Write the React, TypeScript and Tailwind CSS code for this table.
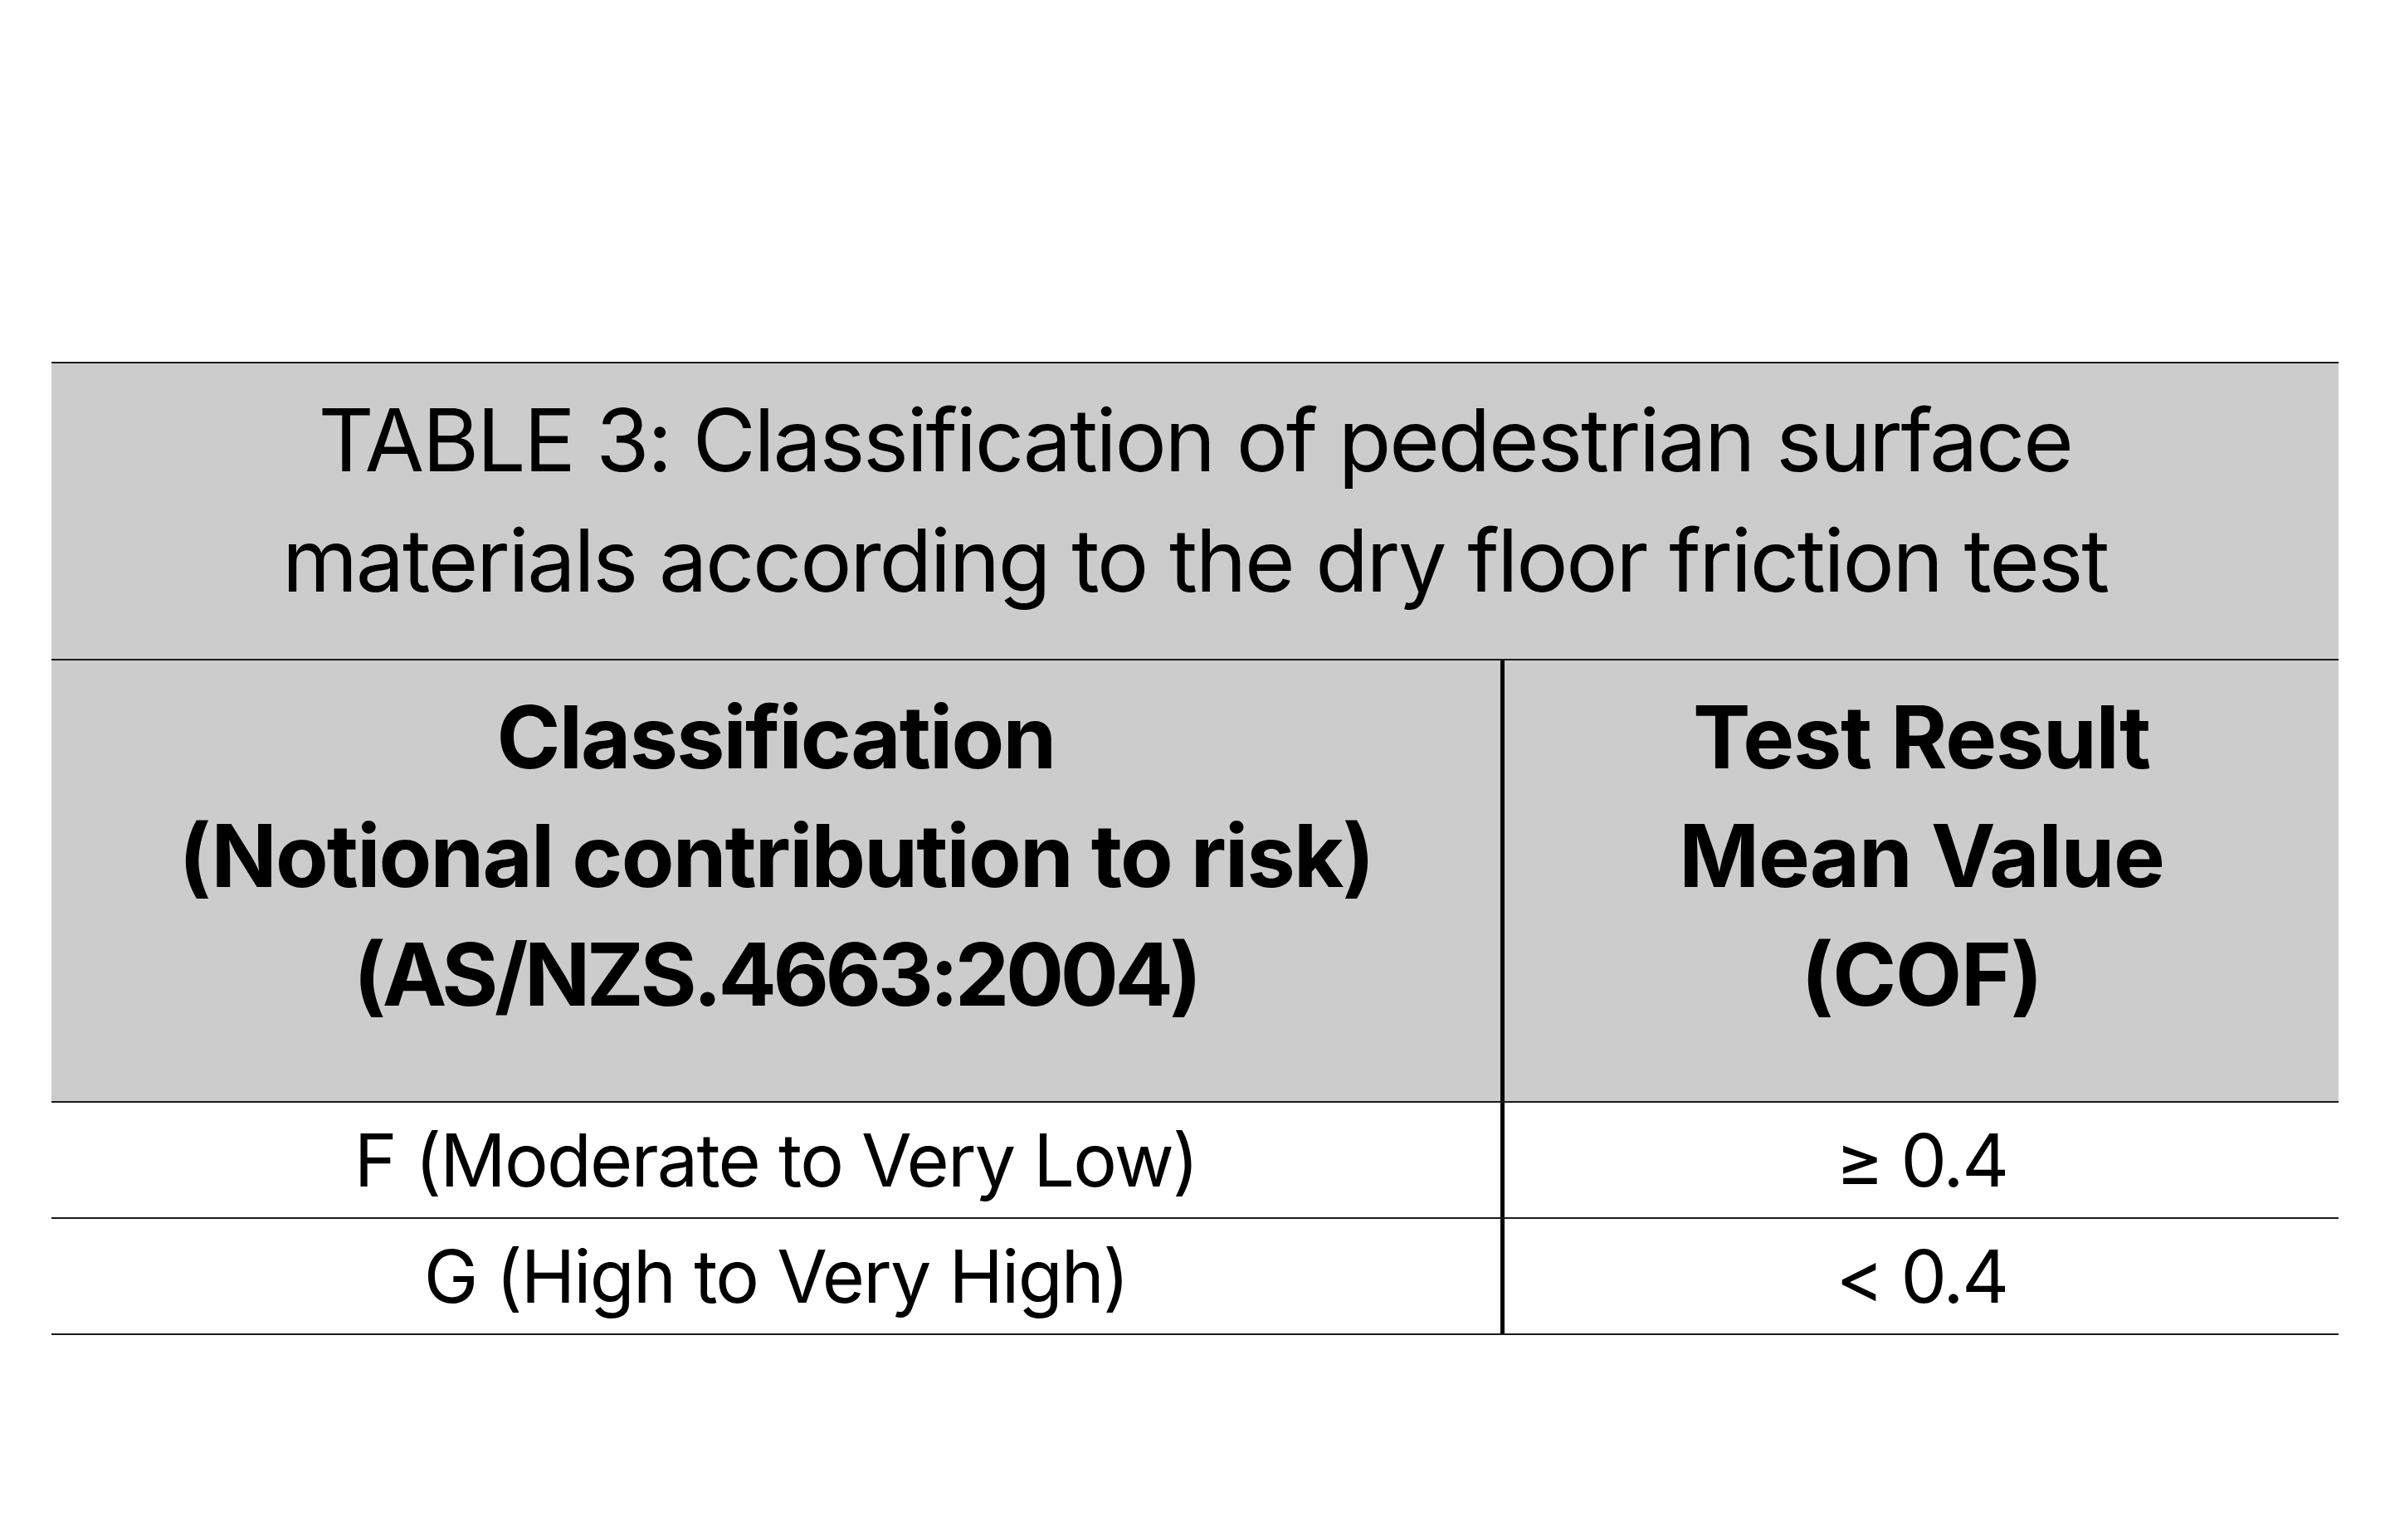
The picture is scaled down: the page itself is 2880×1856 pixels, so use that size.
import React from 'react';

const rows = [
  { cls: 'F (Moderate to Very Low)', cof: '≥ 0.4' },
  { cls: 'G (High to Very High)', cof: '< 0.4' },
];

export default function App() {
  return (
    <div className="w-[2880px] h-[1856px] bg-white pt-[436px] px-[62px] font-['Inter',sans-serif] text-black">
      <div className="w-[2756px]">
        {/* title */}
        <div className="h-[360px] bg-[#cccccc] border-t-2 border-b-2 border-[#1a1a1a] flex items-center justify-center pb-[26px]">
          <p className="text-center text-[104px] leading-[145px] tracking-[-2.3px]">
            TABLE 3: Classification of pedestrian surface
            <br />
            materials according to the dry floor friction test
          </p>
        </div>

        {/* column headers */}
        <div className="grid grid-cols-[1751px_1005px] bg-[#cccccc] border-b-2 border-[#1a1a1a]">
          <div className="h-[531px] flex items-center justify-center border-r-[5px] border-black pb-[60px]">
            <p className="text-center font-bold text-[104px] leading-[143px] tracking-[-1.8px]">
              Classification
              <br />
              (Notional contribution to risk)
              <br />
              <span className="tracking-[-4.4px]">(AS/NZS.4663:2004)</span>
            </p>
          </div>
          <div className="h-[531px] flex items-center justify-center pb-[60px]">
            <p className="text-center font-bold text-[104px] leading-[143px] tracking-[-1.2px]">
              Test Result
              <br />
              Mean Value
              <br />
              (COF)
            </p>
          </div>
        </div>

        {/* data rows */}
        {rows.map((r) => (
          <div key={r.cof} className="grid grid-cols-[1751px_1005px] border-b-2 border-[#1a1a1a]">
            <div className="h-[138px] flex items-center justify-center border-r-[5px] border-black">
              <span className="text-[88px] leading-none tracking-[-1.8px]">{r.cls}</span>
            </div>
            <div className="h-[138px] flex items-center justify-center">
              <span className="text-[88px] leading-none tracking-[-2.4px]">{r.cof}</span>
            </div>
          </div>
        ))}
      </div>
    </div>
  );
}
